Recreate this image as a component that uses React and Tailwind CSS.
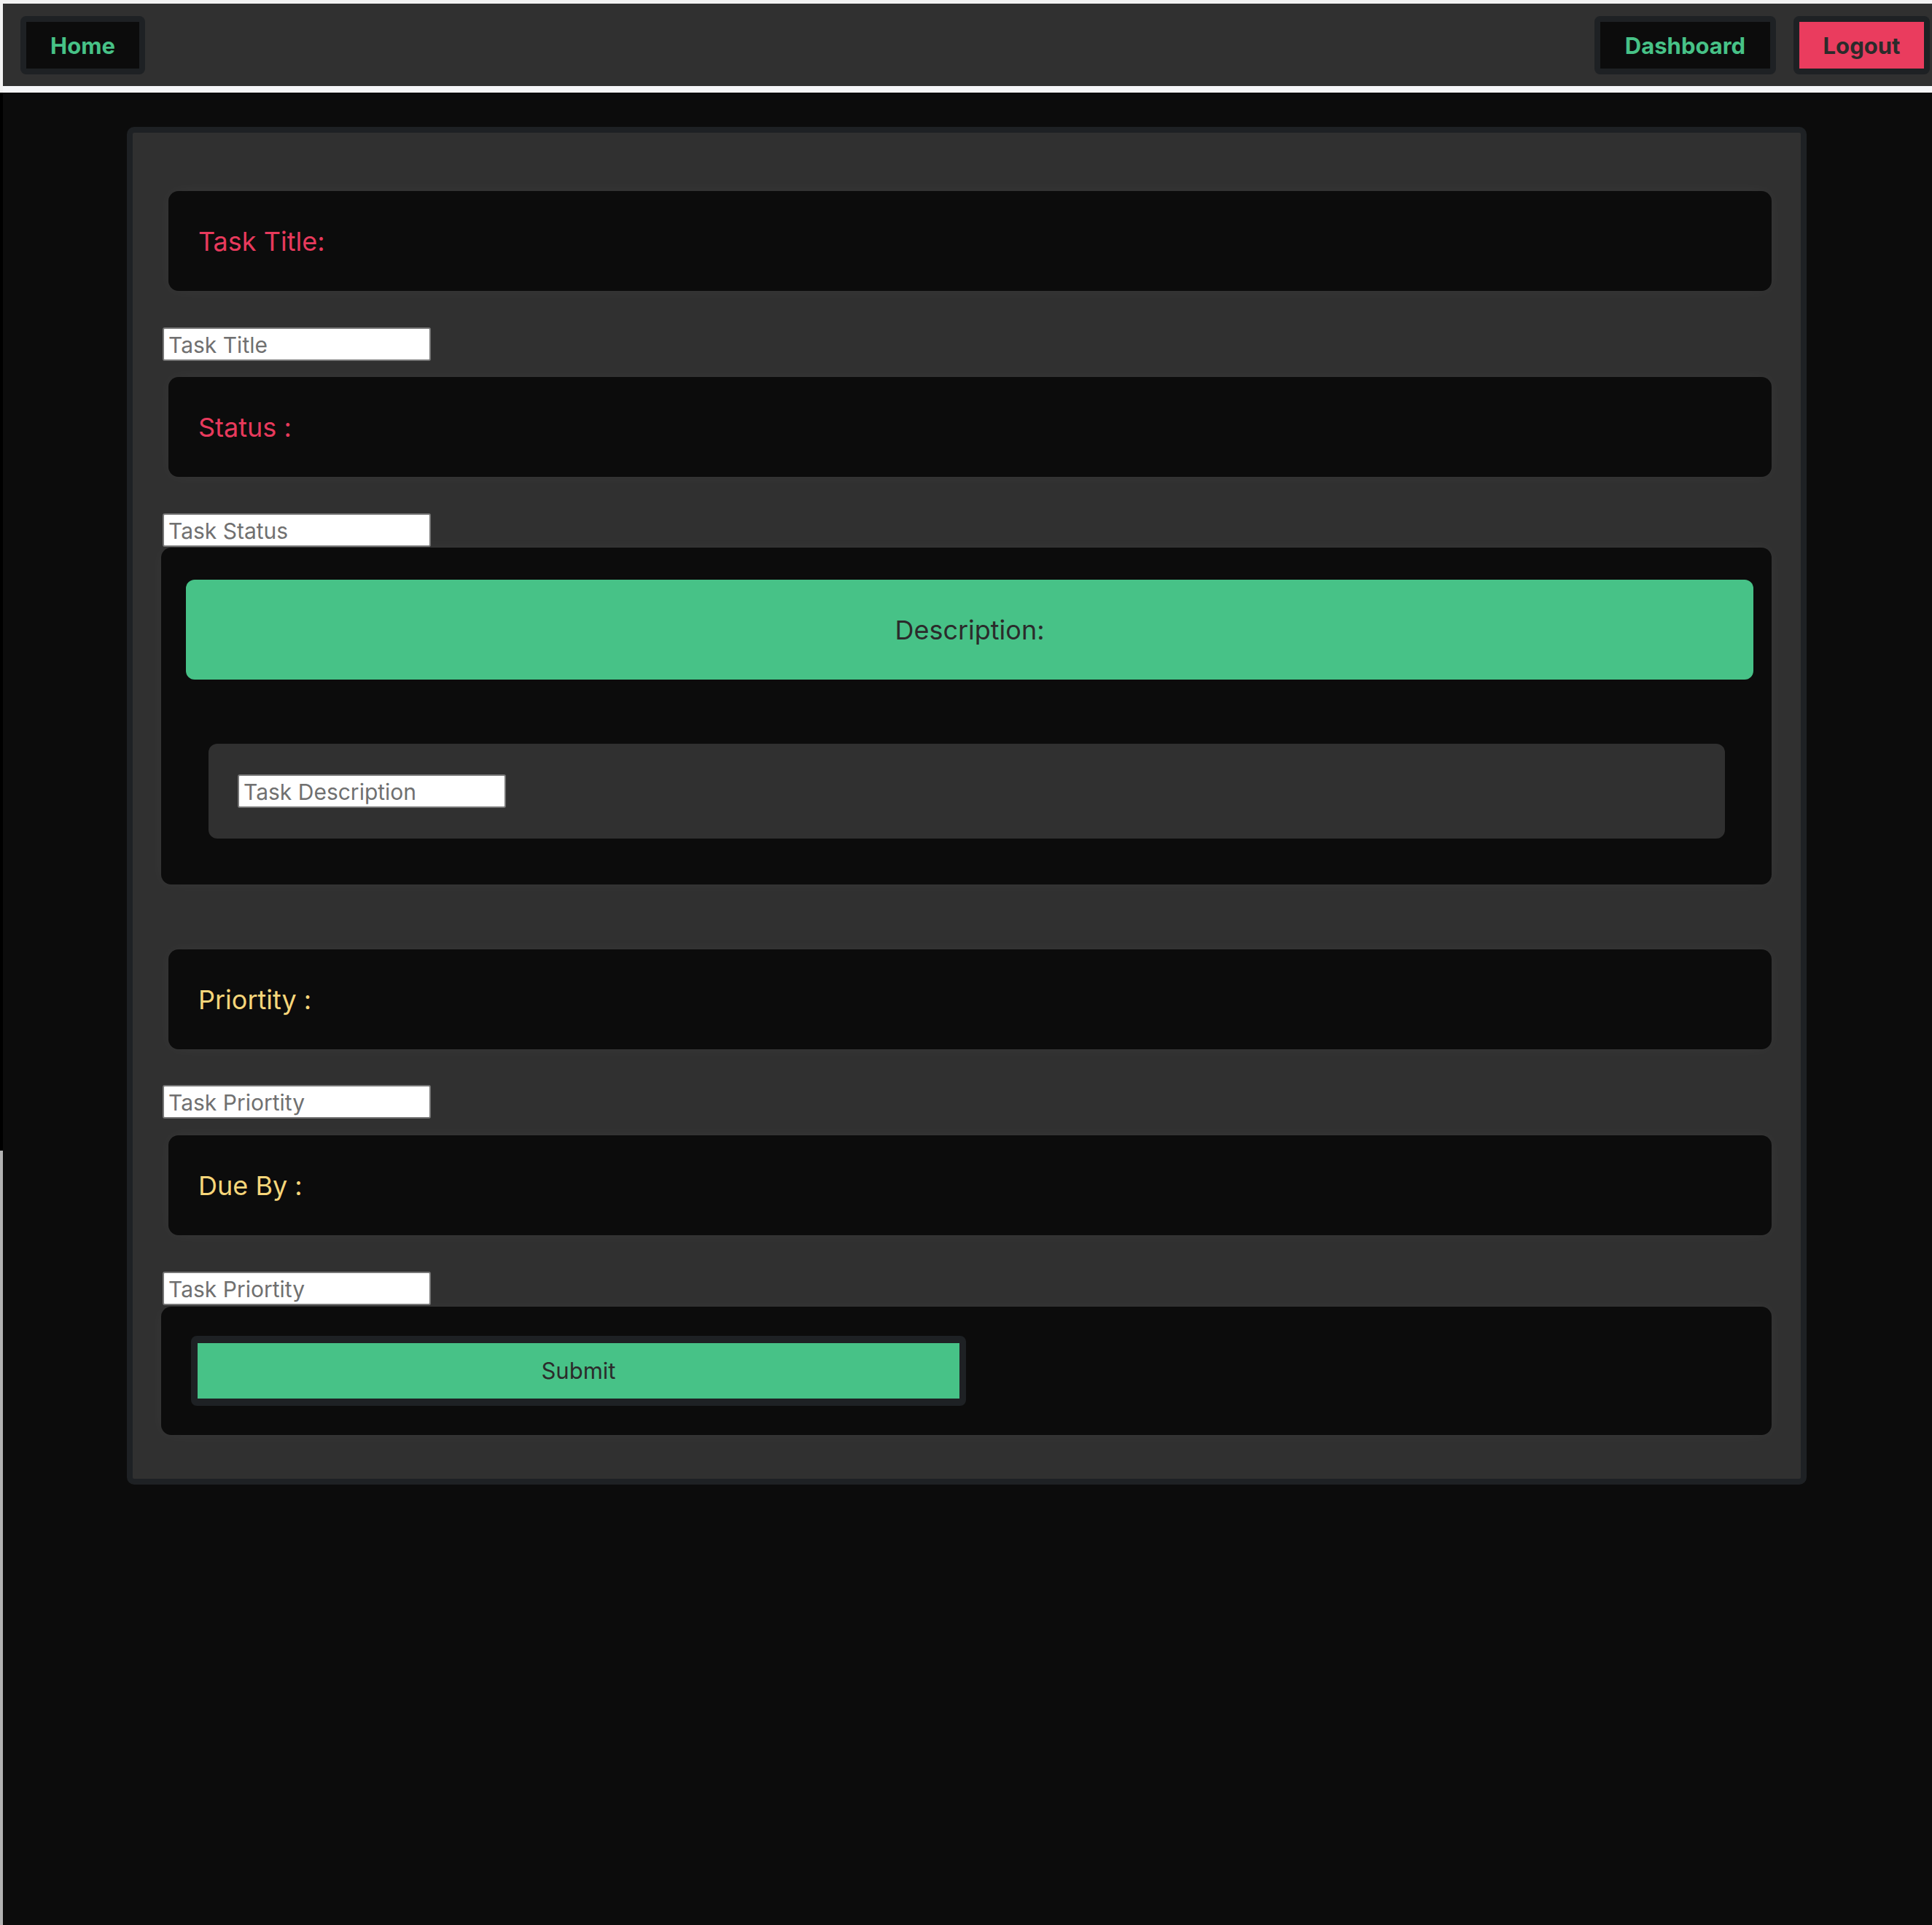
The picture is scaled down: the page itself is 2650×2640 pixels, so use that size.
import React from "react";

const font = { fontFamily: "Inter, 'Liberation Sans', sans-serif" };

function LabelBox({ children, color }) {
  return (
    <div
      className={`ml-[10px] h-[137px] rounded-[14px] bg-[#0c0c0c] flex items-center pl-[41px] text-[36px] shadow-[0_0_22px_rgba(255,255,255,0.035)] ${color}`}
    >
      {children}
    </div>
  );
}

function TextInput({ placeholder, className = "" }) {
  return (
    <input
      type="text"
      placeholder={placeholder}
      className={`block w-[368px] h-[46px] bg-white border-2 border-[#767676] rounded-[3px] pl-[6px] pt-[2px] text-[30px] text-[#222] placeholder:text-[#707070] outline-none ${className}`}
      style={font}
    />
  );
}

function NavButton({ children, w, inner }) {
  return (
    <div className={`h-[80px] ${w} rounded-[8px] bg-[#1e2124] p-[8px] flex`}>
      <div className={`flex-1 flex items-center justify-center pt-[3px] text-[31px] font-bold ${inner}`}>
        {children}
      </div>
    </div>
  );
}

export default function App() {
  return (
    <div className="min-h-[2640px] w-full bg-[#0c0c0c] flex" style={font}>
      <div className="w-[4px] shrink-0 flex flex-col">
        <div className="h-[127px] bg-[#f2f2f2]" />
        <div className="h-[1451px] bg-black" />
        <div className="flex-1 bg-[#b3b3b3]" />
      </div>
      <div className="flex-1 flex flex-col">
        <div className="h-[5px] bg-[#f2f2f2]" />
        <nav className="h-[113px] bg-[#303030] flex items-center justify-between pl-[24px] pr-[3px]">
          <NavButton w="w-[171px]" inner="bg-[#0c0c0c] text-[#47c287]">Home</NavButton>
          <div className="flex items-center gap-[24px]">
            <NavButton w="w-[249px]" inner="bg-[#0c0c0c] text-[#47c287]">Dashboard</NavButton>
            <NavButton w="w-[187px]" inner="bg-[#ea3c5e] text-[#2b2b2b]">Logout</NavButton>
          </div>
        </nav>
        <div className="h-[9px] bg-[#f5f6f8]" />

        <div className="pt-[47px] pl-[170px]">
          <div className="w-[2304px] border-[8px] border-[#1e2124] rounded-[10px] bg-[#303030]">
            <div className="pt-[80px] pb-[60px] pl-[39px] pr-[40px] flex flex-col">
              <LabelBox color="text-[#e83a5c]">Task Title:</LabelBox>
              <TextInput placeholder="Task Title" className="ml-[2px] mt-[50px]" />

              <div className="mt-[22px]">
                <LabelBox color="text-[#e83a5c]">Status :</LabelBox>
              </div>
              <TextInput placeholder="Task Status" className="ml-[2px] mt-[50px]" />

              <div className="mt-[1px] rounded-[14px] bg-[#0c0c0c] pt-[44px] pb-[63px] shadow-[0_0_22px_rgba(255,255,255,0.035)]">
                <div className="ml-[34px] mr-[25px] h-[137px] rounded-[12px] bg-[#47c287] flex items-center justify-center text-[36px] text-[#2b2b2b]">
                  Description:
                </div>
                <div className="mt-[88px] ml-[65px] mr-[64px] h-[130px] rounded-[12px] bg-[#303030] flex items-center pl-[40px]">
                  <TextInput placeholder="Task Description" />
                </div>
              </div>

              <div className="mt-[89px]">
                <LabelBox color="text-[#f7d67a]">Priortity :</LabelBox>
              </div>
              <TextInput placeholder="Task Priortity" className="ml-[2px] mt-[49px]" />

              <div className="mt-[23px]">
                <LabelBox color="text-[#f7d67a]">Due By :</LabelBox>
              </div>
              <TextInput placeholder="Task Priortity" className="ml-[2px] mt-[50px]" />

              <div className="mt-[2px] h-[176px] rounded-[14px] bg-[#0c0c0c] flex items-center pl-[41px] shadow-[0_0_22px_rgba(255,255,255,0.035)]">
                <button
                  type="button"
                  className="w-[1063px] h-[96px] border-y-[10px] border-x-[9px] border-[#1e2124] rounded-[8px] bg-[#47c287] text-[31px] text-[#2b2b2b] flex items-center justify-center"
                  style={font}
                >
                  Submit
                </button>
              </div>
            </div>
          </div>
        </div>
      </div>
    </div>
  );
}
